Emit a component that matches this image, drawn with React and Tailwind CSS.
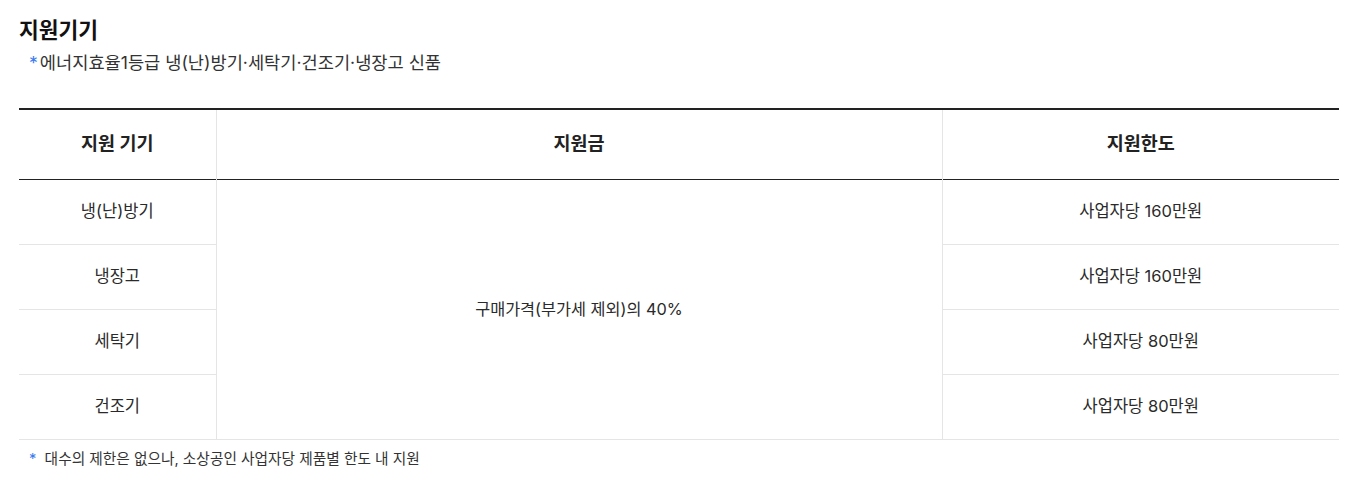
import React from "react";

const rows = [
  { name: "냉(난)방기", limit: "사업자당 160만원" },
  { name: "냉장고", limit: "사업자당 160만원" },
  { name: "세탁기", limit: "사업자당 80만원" },
  { name: "건조기", limit: "사업자당 80만원" },
];

export default function App() {
  return (
    <div
      className="bg-white px-[19px] pt-[14px] text-[#333]"
      style={{ fontFamily: '"Inter", "Noto Sans CJK KR", sans-serif' }}
    >
      <h2 className="text-[21.5px] font-bold leading-[32px] text-[#111]">지원기기</h2>
      <p className="mt-[5px] pl-[10px] text-[17.6px] leading-[24px] text-[#333]">
        <span className="mr-[2px] text-[#3b7bf0]">*</span>에너지효율1등급 냉(난)방기·세탁기·건조기·냉장고 신품
      </p>

      <table className="mt-[33px] w-[1320px] border-collapse border-t-2 border-[#222] text-center">
        <colgroup>
          <col className="w-[197px]" />
          <col className="w-[726px]" />
          <col />
        </colgroup>
        <thead>
          <tr className="h-[70px] border-b border-[#222]">
            <th className="text-[18.5px] font-semibold text-[#222]">지원 기기</th>
            <th className="border-l border-[#e5e5e5] text-[18.5px] font-semibold text-[#222]">지원금</th>
            <th className="border-l border-[#e5e5e5] text-[18.5px] font-semibold text-[#222]">지원한도</th>
          </tr>
        </thead>
        <tbody>
          {rows.map((r, i) => (
            <tr key={r.name} className="h-[65px] border-b border-[#e5e5e5]">
              <td className="text-[16.5px] text-[#2a2a2a]">{r.name}</td>
              {i === 0 && (
                <td rowSpan={4} className="border-l border-r border-[#e5e5e5] text-[16.3px] text-[#2a2a2a]">
                  구매가격(부가세 제외)의 40%
                </td>
              )}
              <td className="text-[16.5px] text-[#2a2a2a]">{r.limit}</td>
            </tr>
          ))}
        </tbody>
      </table>

      <p className="mt-[7px] pl-[10px] text-[14.7px] leading-[24px] text-[#333]">
        <span className="text-[#3b7bf0]">*</span>&nbsp; 대수의 제한은 없으나, 소상공인 사업자당 제품별 한도 내 지원
      </p>
    </div>
  );
}
